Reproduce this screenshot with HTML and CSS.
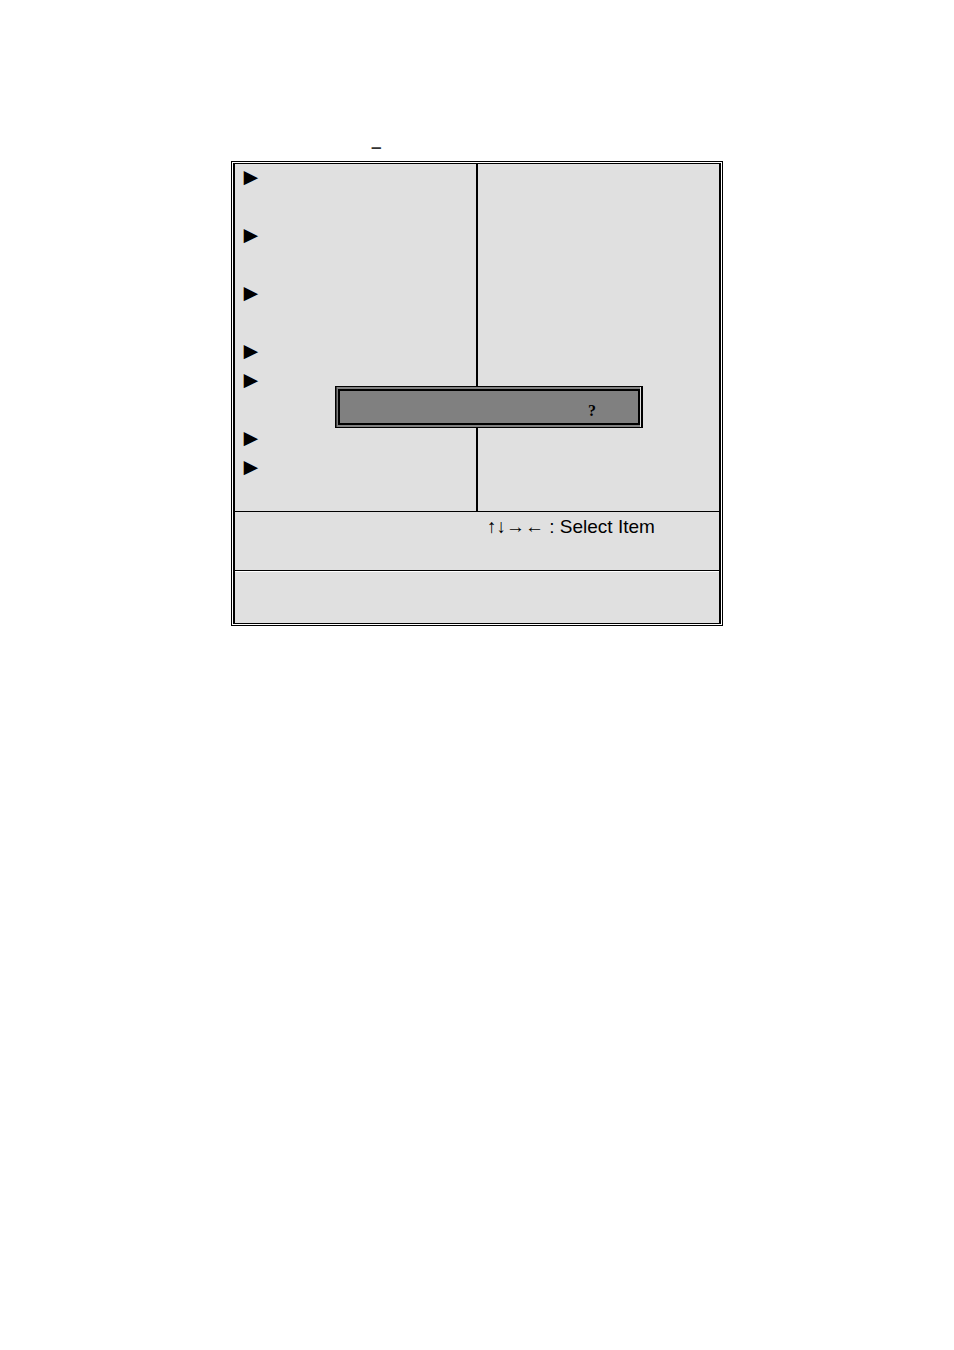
FILE: index.html
```html
<!DOCTYPE html>
<html lang="en">
<head>
    <meta charset="UTF-8" />
    <meta name="viewport" content="width=device-width, initial-scale=1.0" />
    <title>Setup Utility</title>
    <link rel="stylesheet" href="styles.css">
</head>
<body>
    <main class="page">
        <div class="heading">–</div>
        <section class="setup">
            <div class="columns">
                <ul class="menu">
                    <li class="tall">►</li>
                    <li class="tall">►</li>
                    <li class="tall">►</li>
                    <li>►</li>
                    <li class="tall">►</li>
                    <li>►</li>
                    <li>►</li>
                </ul>
                <div class="divider"></div>
                <div class="options"></div>
                <div class="dialog" role="dialog" aria-label="Confirm">
                    <div class="dialog-body">?</div>
                </div>
            </div>
            <div class="keys">
                <p><span class="arrows">↑↓→←</span> : Select Item</p>
            </div>
            <div class="status"></div>
        </section>
    </main>
</body>
</html>
```

FILE: styles.css
```css
body {
    margin: 0;
    background-color: #fff;
    color: #000;
    font-family: "Liberation Sans", Arial, sans-serif;
    font-size: 19px;
    line-height: 29px;
}

.page {
    max-width: 492px;
    margin: 0 auto;
    padding-top: 132px;
}

.heading {
    padding-left: 140px;
    color: #333;
    font-weight: bold;
}

/* Double frame around the setup screen */
.setup {
    border: 1px solid #000;
    padding: 1px;
    background-color: #fff;
}

.columns,
.keys,
.status {
    border: 0 solid #000;
    border-width: 1px 2px 0;
    background-color: #e0e0e0;
}

.columns {
    position: relative;
    display: grid;
    grid-template-columns: 1fr 2px 1fr;
}

.menu {
    list-style: none;
    margin: 0;
    padding: 0 4px 28px;
    font-size: 24px;
    line-height: 26px;
}

.menu li {
    height: 29px;
}

.menu .tall {
    height: 58px;
}

.divider {
    background-color: #000;
}

/* Confirmation box over both columns */
.dialog {
    position: absolute;
    top: 222px;
    left: 100px;
    right: 76px;
    border: 1px solid #000;
    border-right-width: 2px;
    padding: 2px 1px 2px 2px;
    background-color: #808080;
    box-shadow: inset -1px 0 #e0e0e0, inset 1px 0 #404040;
}

.dialog-body {
    border: 2px solid #000;
    padding: 8px 42px 0;
    text-align: right;
    font-family: "Liberation Serif", serif;
    font-size: 16px;
    font-weight: bold;
    line-height: 24px;
}

.keys {
    display: grid;
    grid-template-columns: 1fr 1fr;
    min-height: 58px;
}

.keys p {
    grid-column: 2;
    margin: 0;
    padding-left: 10px;
}

.arrows {
    font-family: "Liberation Serif", serif;
}

.status {
    min-height: 52px;
    border-bottom-width: 1px;
    box-shadow: inset 0 1px #fff;
}
```
